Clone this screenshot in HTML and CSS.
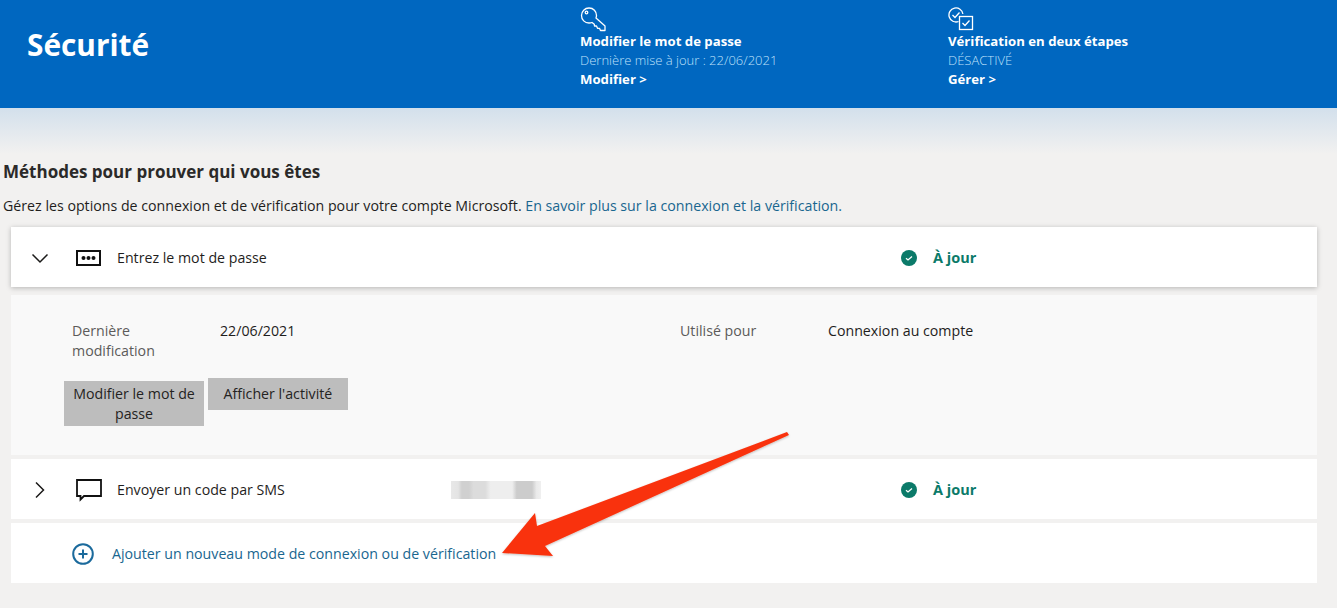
FILE: index.html
```html
<!DOCTYPE html>
<html lang="fr">
<head>
<meta charset="utf-8">
<title>Sécurité</title>
<link rel="stylesheet" href="styles.css">
</head>
<body>
<header class="banner">
  <h1 class="banner-title">Sécurité</h1>
  <section class="banner-item banner-item-password">
    <svg class="banner-icon" width="26" height="32" viewBox="0 0 26 32" fill="none" stroke="#fff" stroke-width="1.3" stroke-linejoin="round">
      <path d="M9 8C13.500 8 16.500 11.500 16.500 15.500C16.500 16.500 16.300 17.200 16 18L25 26V30.500H20.500L19.500 28.300H17.500L16.500 26H14.500L14.300 24.300L12 22.500C11 22.900 10 23 9 23C4.800 23 1.500 19.800 1.500 15.500C1.500 11.500 4.800 8 9 8Z"/>
      <circle cx="6.500" cy="12.500" r="1.300"/>
    </svg>
    <div class="banner-strong">Modifier le mot de passe</div>
    <div class="banner-light">Dernière mise à jour : 22/06/2021</div>
    <a class="banner-strong banner-link">Modifier &gt;</a>
  </section>
  <section class="banner-item banner-item-steps">
    <svg class="banner-icon" width="26" height="32" viewBox="0 0 26 32" fill="none" stroke="#fff" stroke-width="1.300">
      <path d="M10.500 21.500A7 7 0 1 1 14.900 14M4.500 15L7 17.500L11.500 12.500"/>
      <rect x="11.500" y="16.500" width="13" height="13"/>
      <path d="M14.500 23L17 25.500L21.500 20.500"/>
    </svg>
    <div class="banner-strong">Vérification en deux étapes</div>
    <div class="banner-light">DÉSACTIVÉ</div>
    <a class="banner-strong banner-link">Gérer &gt;</a>
  </section>
</header>
<div class="fade"></div>
<main class="content">
  <h2 class="section-title">Méthodes pour prouver qui vous êtes</h2>
  <p class="section-intro">Gérez les options de connexion et de vérification pour votre compte Microsoft. <a class="link">En savoir plus sur la connexion et la vérification.</a></p>
  <div class="methods">
    <div class="row row-raised">
      <svg class="chevron" width="18" height="18" viewBox="0 0 18 18" fill="none" stroke="#1b1a19" stroke-width="1.500"><path d="M1.500 5.500L9 13L16.500 5.500"/></svg>
      <svg class="method-icon" width="26" height="18" viewBox="0 0 26 18" fill="none"><rect x="1" y="2" width="23" height="14" stroke="#111" stroke-width="2"/><circle cx="7.500" cy="9" r="2" fill="#111"/><circle cx="12.500" cy="9" r="2" fill="#111"/><circle cx="17.500" cy="9" r="2" fill="#111"/></svg>
      <span class="method-name">Entrez le mot de passe</span>
      <span class="status">
        <svg width="16" height="16" viewBox="0 0 16 16"><circle cx="8" cy="8" r="8" fill="#0b7a69"/><path d="M5 8.300L7 10L11 6.500" stroke="#fff" stroke-width="1.300" fill="none"/></svg>
        À jour
      </span>
    </div>
    <div class="details">
      <div class="details-grid">
        <span class="label label-wrap">Dernière modification</span>
        <span class="value value-date">22/06/2021</span>
        <span class="label label-used">Utilisé pour</span>
        <span class="value">Connexion au compte</span>
      </div>
      <div class="actions">
        <button class="btn btn-wrap">Modifier le mot de passe</button>
        <button class="btn">Afficher l'activité</button>
      </div>
    </div>
    <div class="row">
      <svg class="chevron" width="18" height="18" viewBox="0 0 18 18" fill="none" stroke="#1b1a19" stroke-width="1.500"><path d="M5 1.500L12.500 9L5 16.500"/></svg>
      <svg class="method-icon" width="26" height="24" viewBox="0 0 26 24" fill="none"><path d="M1 2H25V18H8L4.500 21.500V18H1Z" stroke="#111" stroke-width="1.800"/></svg>
      <span class="method-name method-name-sms">Envoyer un code par SMS</span>
      <span class="blur"></span>
      <span class="status status-sms">
        <svg width="16" height="16" viewBox="0 0 16 16"><circle cx="8" cy="8" r="8" fill="#0b7a69"/><path d="M5 8.300L7 10L11 6.500" stroke="#fff" stroke-width="1.300" fill="none"/></svg>
        À jour
      </span>
    </div>
    <div class="row row-add">
      <svg class="add-icon" width="22" height="22" viewBox="0 0 22 22" fill="none" stroke="#1b6a9c" stroke-width="2"><circle cx="11" cy="11" r="9.800"/><path d="M11 6.500V15.500M6.500 11H15.500"/></svg>
      <a class="link add-link">Ajouter un nouveau mode de connexion ou de vérification</a>
    </div>
  </div>
</main>
<svg class="arrow" width="300" height="135" viewBox="495 428 300 135">
  <defs><filter id="arrow-shadow" x="-5%" y="-5%" width="110%" height="115%"><feDropShadow dx="0" dy="1" stdDeviation="1" flood-color="#000" flood-opacity=".25"/></filter></defs>
  <path filter="url(#arrow-shadow)" fill="#f9320c" d="M502 553L535 513L537 526L787 432L789 435L545 546L553 556Z"/>
</svg>
</body>
</html>
```
FILE: styles.css
```css
* { box-sizing: border-box; }
html, body { margin: 0; padding: 0; }
body {
  position: relative;
  width: 1337px;
  height: 608px;
  overflow: hidden;
  background: #f2f1f0;
  color: #1f1e1d;
  font-family: "Open Sans", "Noto Sans", "Liberation Sans", sans-serif;
  font-size: 14.200px;
  line-height: 20px;
}
.banner {
  display: flex;
  height: 108px;
  background: #0067c0;
  color: #fff;
}
.banner-title {
  width: 580px;
  margin: 0;
  padding: 25px 0 0 27px;
  font-size: 29.800px;
  line-height: 40px;
  font-weight: 700;
}
.banner-item { font-size: 13px; line-height: 19px; }
.banner-item-password { width: 368px; }
.banner-icon { display: block; }
.banner-strong { display: block; font-size: 13.200px; font-weight: 700; color: #fff; }
.banner-light { color: #bfe0fa; font-weight: 300; }
.fade { height: 46px; background: linear-gradient(#d3e0ec, #f2f1f0); }
.content { padding: 7px 20px 0 3px; }
.section-title { margin: 0; font-size: 17px; line-height: 22px; font-weight: 700; color: #2b2a29; }
.section-intro { margin: 13px 0 0; line-height: 20px; }
.link { color: #19668f; }
.methods { display: flex; flex-direction: column; gap: 4px; margin: 11px 0 0 8px; }
.row { display: flex; align-items: center; height: 60px; background: #fff; padding: 1px 0 0 20px; }
.row-raised { margin-bottom: 4px; box-shadow: 0 1px 5px rgba(0,0,0,.25); }
.chevron { flex: none; margin-right: 27px; }
.method-icon { flex: none; margin-right: 15px; }
.method-name { width: 784px; color: #1f1e1d; }
.method-name-sms { width: 334px; }
.blur {
  width: 90px;
  height: 18px;
  margin-right: 360px;
  background: linear-gradient(90deg, #e8e8e8 0, #e4e4e4 8%, #d0d0d0 12%, #d0d0d0 20%, #dcdcdc 25%, #dcdcdc 38%, #eeeeee 44%, #eeeeee 68%, #cccccc 73%, #cccccc 90%, #eaeaea 95%, #f0f0f0 100%);
}
.status { display: flex; align-items: center; gap: 16px; color: #0b7a69; font-size: 14.500px; font-weight: 700; }
.details { height: 160px; background: #f9f9f9; padding: 26px 0 0 53px; }
.details-grid { display: flex; padding-left: 8px; }
.label { color: #5c5b5a; }
.label-wrap { width: 100px; margin-right: 48px; }
.value-date { width: 460px; }
.label-used { width: 148px; }
.value { color: #1f1e1d; }
.actions { display: flex; align-items: flex-start; gap: 4px; margin-top: 17px; }
.btn {
  border: 0;
  background: #bdbdbd;
  color: #242322;
  font: inherit;
  padding: 3px 8px 2px;
  min-height: 32px;
}
.btn:not(.btn-wrap) { padding: 3px 15.500px; }
.btn-wrap { width: 140px; margin-top: 3px; }
.row-add { padding-left: 61px; }
.add-icon { flex: none; margin-right: 18px; }
.arrow { position: absolute; left: 495px; top: 428px; }
```
